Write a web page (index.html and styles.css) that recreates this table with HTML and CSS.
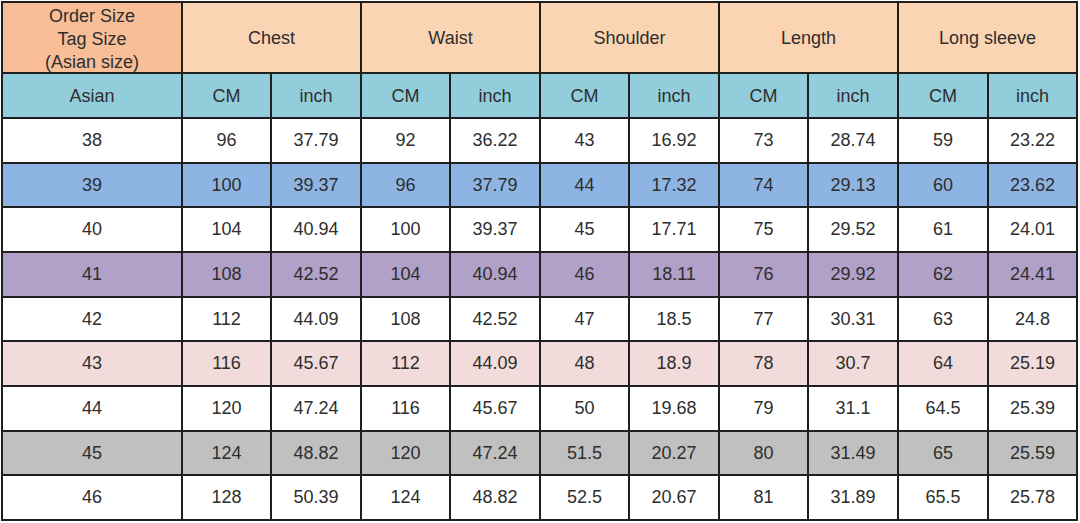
FILE: index.html
```html
<!DOCTYPE html>
<html>
<head>
<meta charset="utf-8">
<link rel="stylesheet" href="styles.css">
</head>
<body>
<div class="sheet">
  <div class="c h0 r2">Order Size<br>Tag Size<br>(Asian size)</div>
  <div class="c h1 s2">Chest</div>
  <div class="c h1 s2">Waist</div>
  <div class="c h1 s2">Shoulder</div>
  <div class="c h1 s2">Length</div>
  <div class="c h1 s2">Long sleeve</div>

  <div class="c sub">Asian</div>
  <div class="c sub">CM</div><div class="c sub">inch</div>
  <div class="c sub">CM</div><div class="c sub">inch</div>
  <div class="c sub">CM</div><div class="c sub">inch</div>
  <div class="c sub">CM</div><div class="c sub">inch</div>
  <div class="c sub">CM</div><div class="c sub">inch</div>

  <div class="c w">38</div><div class="c w">96</div><div class="c w">37.79</div><div class="c w">92</div><div class="c w">36.22</div><div class="c w">43</div><div class="c w">16.92</div><div class="c w">73</div><div class="c w">28.74</div><div class="c w">59</div><div class="c w">23.22</div>
  <div class="c b">39</div><div class="c b">100</div><div class="c b">39.37</div><div class="c b">96</div><div class="c b">37.79</div><div class="c b">44</div><div class="c b">17.32</div><div class="c b">74</div><div class="c b">29.13</div><div class="c b">60</div><div class="c b">23.62</div>
  <div class="c w">40</div><div class="c w">104</div><div class="c w">40.94</div><div class="c w">100</div><div class="c w">39.37</div><div class="c w">45</div><div class="c w">17.71</div><div class="c w">75</div><div class="c w">29.52</div><div class="c w">61</div><div class="c w">24.01</div>
  <div class="c p">41</div><div class="c p">108</div><div class="c p">42.52</div><div class="c p">104</div><div class="c p">40.94</div><div class="c p">46</div><div class="c p">18.11</div><div class="c p">76</div><div class="c p">29.92</div><div class="c p">62</div><div class="c p">24.41</div>
  <div class="c w">42</div><div class="c w">112</div><div class="c w">44.09</div><div class="c w">108</div><div class="c w">42.52</div><div class="c w">47</div><div class="c w">18.5</div><div class="c w">77</div><div class="c w">30.31</div><div class="c w">63</div><div class="c w">24.8</div>
  <div class="c k">43</div><div class="c k">116</div><div class="c k">45.67</div><div class="c k">112</div><div class="c k">44.09</div><div class="c k">48</div><div class="c k">18.9</div><div class="c k">78</div><div class="c k">30.7</div><div class="c k">64</div><div class="c k">25.19</div>
  <div class="c w">44</div><div class="c w">120</div><div class="c w">47.24</div><div class="c w">116</div><div class="c w">45.67</div><div class="c w">50</div><div class="c w">19.68</div><div class="c w">79</div><div class="c w">31.1</div><div class="c w">64.5</div><div class="c w">25.39</div>
  <div class="c g">45</div><div class="c g">124</div><div class="c g">48.82</div><div class="c g">120</div><div class="c g">47.24</div><div class="c g">51.5</div><div class="c g">20.27</div><div class="c g">80</div><div class="c g">31.49</div><div class="c g">65</div><div class="c g">25.59</div>
  <div class="c w">46</div><div class="c w">128</div><div class="c w">50.39</div><div class="c w">124</div><div class="c w">48.82</div><div class="c w">52.5</div><div class="c w">20.67</div><div class="c w">81</div><div class="c w">31.89</div><div class="c w">65.5</div><div class="c w">25.78</div>
</div>
</body>
</html>
```

FILE: styles.css
```css
html, body {
  margin: 0;
  padding: 0;
  background: #ffffff;
}
body {
  width: 1080px;
  height: 523px;
  overflow: hidden;
}
.sheet {
  margin: 1px 0 0 1px;
  width: 1077px;
  box-sizing: border-box;
  padding: 2px;
  background: #1f1f1f;
  display: grid;
  grid-template-columns: 178px 87px 88px 87px 88px 87px 88px 87px 88px 88px 87px;
  grid-template-rows: 23px 44px 43px 43px 42px 43px 43px 42px 43px 43px 42px 43px;
  gap: 2px;
  font-family: "Liberation Sans", Arial, sans-serif;
  font-size: 18px;
  color: #2e2e2e;
}
.c {
  display: flex;
  align-items: center;
  justify-content: center;
  text-align: center;
  line-height: 23px;
}
.h0 {
  grid-row: 1 / span 2;
  background: #f7be98;
  padding-top: 3px;
  box-sizing: border-box;
}
.h1 {
  grid-row: 1 / span 2;
  background: #fbd4b4;
  padding-top: 2px;
  box-sizing: border-box;
}
.s2 { grid-column: span 2; }
.r2 { grid-row: 1 / span 2; }
.sub {
  background: #92cddc;
  padding-top: 2px;
  box-sizing: border-box;
}
.w { background: #ffffff; }
.b { background: #8db4e2; }
.p { background: #b1a0c7; }
.k { background: #f2dcdb; }
.g { background: #c0c0c0; }
```
